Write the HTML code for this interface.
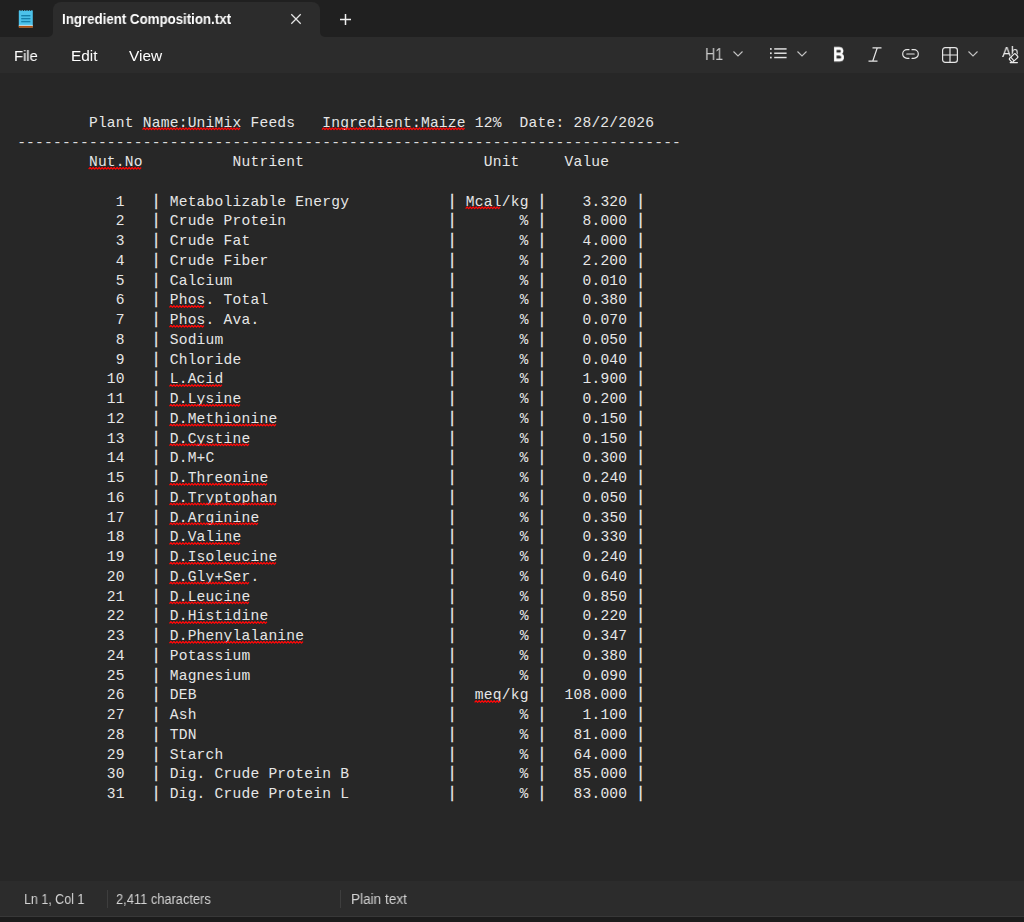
<!DOCTYPE html>
<html lang="en"><head><meta charset="utf-8"><title>Ingredient Composition.txt - Notepad</title>
<style>
*{box-sizing:border-box;margin:0;padding:0}
html,body{width:1024px;height:922px;overflow:hidden;background:#272727}
body{position:relative;font-family:"Liberation Sans",sans-serif;color:#fff}
.abs{position:absolute}
#titlebar{left:0;top:0;width:1024px;height:37px;background:#202020}
#tab{left:53px;top:2px;width:267px;height:36px;background:#2c2c2c;border-radius:8px 8px 0 0}
.flare{width:5px;height:5px;top:32px;background:#2c2c2c}
.flare i{display:block;width:5px;height:5px;background:#202020}
#fl{left:48px}#fl i{border-radius:0 0 5px 0}
#fr{left:320px}#fr i{border-radius:0 0 0 5px}
#menubar{left:0;top:37px;width:1024px;height:36px;background:#2c2c2c}
#editor{left:0;top:73px;width:1024px;height:808px;background:#272727}
#status{left:0;top:881px;width:1024px;height:35px;background:#2c2c2c}
#sline{left:0;top:916px;width:1024px;height:1px;background:#383838}
#bottom{left:0;top:917px;width:1024px;height:5px;background:#1c1c1c}
.t{position:absolute;white-space:pre;transform-origin:0 50%;line-height:20px;height:20px;will-change:transform}
#tabtitle{left:61.5px;top:9.3px;font-size:14px;font-weight:bold;color:#fff;transform:scaleX(.949)}
.menu{font-size:15.4px;top:46.2px;color:#fff}
.st{font-size:14px;top:889px;color:#d2d2d2}
.sep{width:1px;height:18px;top:890px;background:#3e3e3e}
pre{position:absolute;left:17.15px;top:113.5px;font-family:"Liberation Mono",monospace;font-size:14.6px;letter-spacing:0.2145px;line-height:19.75px;color:#e6e6e6;white-space:pre}
pre b{display:inline-block;font-weight:normal;transform:translateY(0.4px) scale(1.0,1.16);transform-origin:50% 92%;-webkit-text-stroke:0.28px #eeeeee;color:#eee}
pre u{text-decoration:none}
pre s{text-decoration:none;position:relative;top:0.8px;color:#dcdcdc}
svg{position:absolute;overflow:visible}
</style></head><body>
<div class="abs" id="titlebar"></div>
<div class="abs" id="menubar"></div>
<div class="abs" id="tab"></div>
<div class="abs flare" id="fl"><i></i></div>
<div class="abs flare" id="fr"><i></i></div>
<div class="abs" id="editor"></div>
<div class="abs" id="status"></div>
<div class="abs" id="sline"></div>
<div class="abs" id="bottom"></div>

<!-- notepad app icon -->
<svg id="appicon" style="left:18px;top:9px" width="16" height="20" viewBox="0 0 16 20">
<rect x="0.8" y="1.3" width="14" height="17.5" rx="0.8" fill="#4cc2ea"/>
<rect x="0.8" y="16.7" width="14" height="2.1" fill="#b4500f"/>
<rect x="0.8" y="15.9" width="14" height="0.8" fill="#d8f0fa"/>
<rect x="3.2" y="6" width="9.2" height="1.4" fill="#1580ab"/>
<rect x="3.2" y="8.95" width="9.2" height="1.4" fill="#1580ab"/>
<rect x="3.2" y="11.9" width="9.2" height="1.4" fill="#1580ab"/>
<g fill="#202020"><rect x="2.6" y="1" width="0.9" height="1"/><rect x="5" y="1" width="0.9" height="1"/><rect x="7.4" y="1" width="0.9" height="1"/><rect x="9.8" y="1" width="0.9" height="1"/><rect x="12.2" y="1" width="0.9" height="1"/></g>
</svg>

<span class="t" id="tabtitle">Ingredient Composition.txt</span>
<svg style="left:291px;top:14px" width="10" height="10" viewBox="0 0 10 10"><path d="M0.3 0.3L9.7 9.7M9.7 0.3L0.3 9.7" stroke="#e6e6e6" stroke-width="1.25" fill="none"/></svg>
<svg style="left:340px;top:14px" width="11" height="11" viewBox="0 0 11 11"><path d="M5.5 0V11M0 5.5H11" stroke="#f0f0f0" stroke-width="1.5" fill="none"/></svg>

<span class="t menu" id="mFile" style="left:14px;transform:scaleX(.96)">File</span>
<span class="t menu" id="mEdit" style="left:70.5px">Edit</span>
<span class="t menu" id="mView" style="left:128.5px">View</span>

<!-- toolbar -->
<span class="t" id="h1" style="left:704.6px;top:44px;font-size:16.5px;color:#c8c8c8;transform:scaleX(.855)">H1</span>
<svg style="left:733px;top:51px" width="10" height="6" viewBox="0 0 10 6"><path d="M0.5 0.5L5 5L9.5 0.5" stroke="#c4c4c4" stroke-width="1.1" fill="none"/></svg>
<svg id="listic" style="left:769.6px;top:48.3px" width="17" height="11" viewBox="0 0 17 11"><g fill="#e4e4e4"><rect x="0" y="0.1" width="1.7" height="1.7"/><rect x="0" y="4.4" width="1.7" height="1.7"/><rect x="0" y="8.7" width="1.7" height="1.7"/><rect x="4.2" y="0.2" width="12.4" height="1.45"/><rect x="4.2" y="4.5" width="12.4" height="1.45"/><rect x="4.2" y="8.8" width="12.4" height="1.45"/></g></svg>
<svg style="left:797px;top:51px" width="10" height="6" viewBox="0 0 10 6"><path d="M0.5 0.5L5 5L9.5 0.5" stroke="#c4c4c4" stroke-width="1.1" fill="none"/></svg>
<span class="t" id="boldB" style="left:832.6px;top:44.8px;font-size:19px;font-weight:bold;color:#fff;transform:scale(.84,1.07);-webkit-text-stroke:0.4px #fff">B</span>
<svg id="italic" style="left:868px;top:47px" width="14" height="15" viewBox="0 0 14 15"><path d="M4.5 0.8H13.5M0.5 14.2H9.5M9.3 0.8L4.7 14.2" stroke="#e6e6e6" stroke-width="1.2" fill="none"/></svg>
<svg id="link" style="left:902.3px;top:49.4px" width="17" height="10" viewBox="0 0 17 10"><path d="M7 0.7H5A4.3 4.3 0 0 0 5 9.3H7M10 0.7H12A4.3 4.3 0 0 1 12 9.3H10M4.8 5H12.2" stroke="#e6e6e6" stroke-width="1.2" fill="none" stroke-linecap="round"/></svg>
<svg id="table" style="left:942px;top:47px" width="16" height="16" viewBox="0 0 16 16"><rect x="0.6" y="0.6" width="14.8" height="14.8" rx="2.6" stroke="#e6e6e6" stroke-width="1.2" fill="none"/><path d="M8 0.6V15.4M0.6 8H15.4" stroke="#e6e6e6" stroke-width="1.2" fill="none"/></svg>
<svg style="left:968px;top:51px" width="10" height="6" viewBox="0 0 10 6"><path d="M0.5 0.5L5 5L9.5 0.5" stroke="#c4c4c4" stroke-width="1.1" fill="none"/></svg>
<span class="t" id="ab" style="left:1001.7px;top:41.9px;font-size:15.4px;color:#e8e8e8;letter-spacing:-0.6px;transform:scaleX(.9)">Ab</span>
<svg id="eraser" style="left:1006px;top:51px" width="14" height="13" viewBox="0 0 14 13"><g transform="translate(7.6 6.9) rotate(-43)"><rect x="-4.1" y="-2.5" width="8.2" height="5" rx="1.3" fill="#2c2c2c" stroke="#2c2c2c" stroke-width="2.4"/><rect x="-4.1" y="-2.5" width="8.2" height="5" rx="1.3" fill="#2c2c2c" stroke="#ebebeb" stroke-width="1.2"/><path d="M-1.7 -2.5V2.5" stroke="#ebebeb" stroke-width="1.1"/></g><path d="M4.2 11.6H11.4" stroke="#ebebeb" stroke-width="1.2" stroke-linecap="round"/></svg>

<pre id="doc">        Plant <u>Name:UniMix</u> Feeds   <u>Ingredient:Maize</u> 12%  Date: 28/2/2026
<s>--------------------------------------------------------------------------</s>
        <u>Nut.No</u>          Nutrient                    Unit     Value

           1   <b>|</b> Metabolizable Energy           <b>|</b> <u>Mcal</u>/kg <b>|</b>    3.320 <b>|</b>
           2   <b>|</b> Crude Protein                  <b>|</b>       % <b>|</b>    8.000 <b>|</b>
           3   <b>|</b> Crude Fat                      <b>|</b>       % <b>|</b>    4.000 <b>|</b>
           4   <b>|</b> Crude Fiber                    <b>|</b>       % <b>|</b>    2.200 <b>|</b>
           5   <b>|</b> Calcium                        <b>|</b>       % <b>|</b>    0.010 <b>|</b>
           6   <b>|</b> <u>Phos</u>. Total                    <b>|</b>       % <b>|</b>    0.380 <b>|</b>
           7   <b>|</b> <u>Phos</u>. Ava.                     <b>|</b>       % <b>|</b>    0.070 <b>|</b>
           8   <b>|</b> Sodium                         <b>|</b>       % <b>|</b>    0.050 <b>|</b>
           9   <b>|</b> Chloride                       <b>|</b>       % <b>|</b>    0.040 <b>|</b>
          10   <b>|</b> <u>L.Acid</u>                         <b>|</b>       % <b>|</b>    1.900 <b>|</b>
          11   <b>|</b> <u>D.Lysine</u>                       <b>|</b>       % <b>|</b>    0.200 <b>|</b>
          12   <b>|</b> <u>D.Methionine</u>                   <b>|</b>       % <b>|</b>    0.150 <b>|</b>
          13   <b>|</b> <u>D.Cystine</u>                      <b>|</b>       % <b>|</b>    0.150 <b>|</b>
          14   <b>|</b> D.M+C                          <b>|</b>       % <b>|</b>    0.300 <b>|</b>
          15   <b>|</b> <u>D.Threonine</u>                    <b>|</b>       % <b>|</b>    0.240 <b>|</b>
          16   <b>|</b> <u>D.Tryptophan</u>                   <b>|</b>       % <b>|</b>    0.050 <b>|</b>
          17   <b>|</b> <u>D.Arginine</u>                     <b>|</b>       % <b>|</b>    0.350 <b>|</b>
          18   <b>|</b> <u>D.Valine</u>                       <b>|</b>       % <b>|</b>    0.330 <b>|</b>
          19   <b>|</b> <u>D.Isoleucine</u>                   <b>|</b>       % <b>|</b>    0.240 <b>|</b>
          20   <b>|</b> <u>D.Gly+Ser</u>.                     <b>|</b>       % <b>|</b>    0.640 <b>|</b>
          21   <b>|</b> <u>D.Leucine</u>                      <b>|</b>       % <b>|</b>    0.850 <b>|</b>
          22   <b>|</b> <u>D.Histidine</u>                    <b>|</b>       % <b>|</b>    0.220 <b>|</b>
          23   <b>|</b> <u>D.Phenylalanine</u>                <b>|</b>       % <b>|</b>    0.347 <b>|</b>
          24   <b>|</b> Potassium                      <b>|</b>       % <b>|</b>    0.380 <b>|</b>
          25   <b>|</b> Magnesium                      <b>|</b>       % <b>|</b>    0.090 <b>|</b>
          26   <b>|</b> DEB                            <b>|</b>  <u>meq</u>/kg <b>|</b>  108.000 <b>|</b>
          27   <b>|</b> Ash                            <b>|</b>       % <b>|</b>    1.100 <b>|</b>
          28   <b>|</b> TDN                            <b>|</b>       % <b>|</b>   81.000 <b>|</b>
          29   <b>|</b> Starch                         <b>|</b>       % <b>|</b>   64.000 <b>|</b>
          30   <b>|</b> Dig. Crude Protein B           <b>|</b>       % <b>|</b>   85.000 <b>|</b>
          31   <b>|</b> Dig. Crude Protein L           <b>|</b>       % <b>|</b>   83.000 <b>|</b></pre>
<svg id="squig" style="left:0;top:0" width="1024" height="922" viewBox="0 0 1024 922"><path d="M142.51 129.60L144.01 128.00L145.51 129.60L147.01 128.00L148.51 129.60L150.01 128.00L151.51 129.60L153.01 128.00L154.51 129.60L156.01 128.00L157.51 129.60L159.01 128.00L160.51 129.60L162.01 128.00L163.51 129.60L165.01 128.00L166.51 129.60L168.01 128.00L169.51 129.60L171.01 128.00L172.51 129.60L174.01 128.00L175.51 129.60L177.01 128.00L178.51 129.60L180.01 128.00L181.51 129.60L183.01 128.00L184.51 129.60L186.01 128.00L187.51 129.60L189.01 128.00L190.51 129.60L192.01 128.00L193.51 129.60L195.01 128.00L196.51 129.60L198.01 128.00L199.51 129.60L201.01 128.00L202.51 129.60L204.01 128.00L205.51 129.60L207.01 128.00L208.51 129.60L210.01 128.00L211.51 129.60L213.01 128.00L214.51 129.60L216.01 128.00L217.51 129.60L219.01 128.00L220.51 129.60L222.01 128.00L223.51 129.60L225.01 128.00L226.51 129.60L228.01 128.00L229.51 129.60L231.01 128.00L232.51 129.60L234.01 128.00L235.51 129.60L237.01 128.00L238.51 129.60L240.01 128.00M322.03 129.60L323.53 128.00L325.03 129.60L326.53 128.00L328.03 129.60L329.53 128.00L331.03 129.60L332.53 128.00L334.03 129.60L335.53 128.00L337.03 129.60L338.53 128.00L340.03 129.60L341.53 128.00L343.03 129.60L344.53 128.00L346.03 129.60L347.53 128.00L349.03 129.60L350.53 128.00L352.03 129.60L353.53 128.00L355.03 129.60L356.53 128.00L358.03 129.60L359.53 128.00L361.03 129.60L362.53 128.00L364.03 129.60L365.53 128.00L367.03 129.60L368.53 128.00L370.03 129.60L371.53 128.00L373.03 129.60L374.53 128.00L376.03 129.60L377.53 128.00L379.03 129.60L380.53 128.00L382.03 129.60L383.53 128.00L385.03 129.60L386.53 128.00L388.03 129.60L389.53 128.00L391.03 129.60L392.53 128.00L394.03 129.60L395.53 128.00L397.03 129.60L398.53 128.00L400.03 129.60L401.53 128.00L403.03 129.60L404.53 128.00L406.03 129.60L407.53 128.00L409.03 129.60L410.53 128.00L412.03 129.60L413.53 128.00L415.03 129.60L416.53 128.00L418.03 129.60L419.53 128.00L421.03 129.60L422.53 128.00L424.03 129.60L425.53 128.00L427.03 129.60L428.53 128.00L430.03 129.60L431.53 128.00L433.03 129.60L434.53 128.00L436.03 129.60L437.53 128.00L439.03 129.60L440.53 128.00L442.03 129.60L443.53 128.00L445.03 129.60L446.53 128.00L448.03 129.60L449.53 128.00L451.03 129.60L452.53 128.00L454.03 129.60L455.53 128.00L457.03 129.60L458.53 128.00L460.03 129.60L461.53 128.00L463.03 129.60L464.53 128.00M88.66 169.10L90.16 167.50L91.66 169.10L93.16 167.50L94.66 169.10L96.16 167.50L97.66 169.10L99.16 167.50L100.66 169.10L102.16 167.50L103.66 169.10L105.16 167.50L106.66 169.10L108.16 167.50L109.66 169.10L111.16 167.50L112.66 169.10L114.16 167.50L115.66 169.10L117.16 167.50L118.66 169.10L120.16 167.50L121.66 169.10L123.16 167.50L124.66 169.10L126.16 167.50L127.66 169.10L129.16 167.50L130.66 169.10L132.16 167.50L133.66 169.10L135.16 167.50L136.66 169.10L138.16 167.50L139.66 169.10L141.16 167.50M465.65 208.60L467.15 207.00L468.65 208.60L470.15 207.00L471.65 208.60L473.15 207.00L474.65 208.60L476.15 207.00L477.65 208.60L479.15 207.00L480.65 208.60L482.15 207.00L483.65 208.60L485.15 207.00L486.65 208.60L488.15 207.00L489.65 208.60L491.15 207.00L492.65 208.60L494.15 207.00L495.65 208.60L497.15 207.00L498.65 208.60L500.15 207.00M169.44 307.35L170.94 305.75L172.44 307.35L173.94 305.75L175.44 307.35L176.94 305.75L178.44 307.35L179.94 305.75L181.44 307.35L182.94 305.75L184.44 307.35L185.94 305.75L187.44 307.35L188.94 305.75L190.44 307.35L191.94 305.75L193.44 307.35L194.94 305.75L196.44 307.35L197.94 305.75L199.44 307.35L200.94 305.75L202.44 307.35L203.94 305.75M169.44 327.10L170.94 325.50L172.44 327.10L173.94 325.50L175.44 327.10L176.94 325.50L178.44 327.10L179.94 325.50L181.44 327.10L182.94 325.50L184.44 327.10L185.94 325.50L187.44 327.10L188.94 325.50L190.44 327.10L191.94 325.50L193.44 327.10L194.94 325.50L196.44 327.10L197.94 325.50L199.44 327.10L200.94 325.50L202.44 327.10L203.94 325.50M169.44 386.35L170.94 384.75L172.44 386.35L173.94 384.75L175.44 386.35L176.94 384.75L178.44 386.35L179.94 384.75L181.44 386.35L182.94 384.75L184.44 386.35L185.94 384.75L187.44 386.35L188.94 384.75L190.44 386.35L191.94 384.75L193.44 386.35L194.94 384.75L196.44 386.35L197.94 384.75L199.44 386.35L200.94 384.75L202.44 386.35L203.94 384.75L205.44 386.35L206.94 384.75L208.44 386.35L209.94 384.75L211.44 386.35L212.94 384.75L214.44 386.35L215.94 384.75L217.44 386.35L218.94 384.75L220.44 386.35L221.94 384.75M169.44 406.10L170.94 404.50L172.44 406.10L173.94 404.50L175.44 406.10L176.94 404.50L178.44 406.10L179.94 404.50L181.44 406.10L182.94 404.50L184.44 406.10L185.94 404.50L187.44 406.10L188.94 404.50L190.44 406.10L191.94 404.50L193.44 406.10L194.94 404.50L196.44 406.10L197.94 404.50L199.44 406.10L200.94 404.50L202.44 406.10L203.94 404.50L205.44 406.10L206.94 404.50L208.44 406.10L209.94 404.50L211.44 406.10L212.94 404.50L214.44 406.10L215.94 404.50L217.44 406.10L218.94 404.50L220.44 406.10L221.94 404.50L223.44 406.10L224.94 404.50L226.44 406.10L227.94 404.50L229.44 406.10L230.94 404.50L232.44 406.10L233.94 404.50L235.44 406.10L236.94 404.50L238.44 406.10L239.94 404.50M169.44 425.85L170.94 424.25L172.44 425.85L173.94 424.25L175.44 425.85L176.94 424.25L178.44 425.85L179.94 424.25L181.44 425.85L182.94 424.25L184.44 425.85L185.94 424.25L187.44 425.85L188.94 424.25L190.44 425.85L191.94 424.25L193.44 425.85L194.94 424.25L196.44 425.85L197.94 424.25L199.44 425.85L200.94 424.25L202.44 425.85L203.94 424.25L205.44 425.85L206.94 424.25L208.44 425.85L209.94 424.25L211.44 425.85L212.94 424.25L214.44 425.85L215.94 424.25L217.44 425.85L218.94 424.25L220.44 425.85L221.94 424.25L223.44 425.85L224.94 424.25L226.44 425.85L227.94 424.25L229.44 425.85L230.94 424.25L232.44 425.85L233.94 424.25L235.44 425.85L236.94 424.25L238.44 425.85L239.94 424.25L241.44 425.85L242.94 424.25L244.44 425.85L245.94 424.25L247.44 425.85L248.94 424.25L250.44 425.85L251.94 424.25L253.44 425.85L254.94 424.25L256.44 425.85L257.94 424.25L259.44 425.85L260.94 424.25L262.44 425.85L263.94 424.25L265.44 425.85L266.94 424.25L268.44 425.85L269.94 424.25L271.44 425.85L272.94 424.25L274.44 425.85L275.94 424.25M169.44 445.60L170.94 444.00L172.44 445.60L173.94 444.00L175.44 445.60L176.94 444.00L178.44 445.60L179.94 444.00L181.44 445.60L182.94 444.00L184.44 445.60L185.94 444.00L187.44 445.60L188.94 444.00L190.44 445.60L191.94 444.00L193.44 445.60L194.94 444.00L196.44 445.60L197.94 444.00L199.44 445.60L200.94 444.00L202.44 445.60L203.94 444.00L205.44 445.60L206.94 444.00L208.44 445.60L209.94 444.00L211.44 445.60L212.94 444.00L214.44 445.60L215.94 444.00L217.44 445.60L218.94 444.00L220.44 445.60L221.94 444.00L223.44 445.60L224.94 444.00L226.44 445.60L227.94 444.00L229.44 445.60L230.94 444.00L232.44 445.60L233.94 444.00L235.44 445.60L236.94 444.00L238.44 445.60L239.94 444.00L241.44 445.60L242.94 444.00L244.44 445.60L245.94 444.00L247.44 445.60L248.94 444.00M169.44 485.10L170.94 483.50L172.44 485.10L173.94 483.50L175.44 485.10L176.94 483.50L178.44 485.10L179.94 483.50L181.44 485.10L182.94 483.50L184.44 485.10L185.94 483.50L187.44 485.10L188.94 483.50L190.44 485.10L191.94 483.50L193.44 485.10L194.94 483.50L196.44 485.10L197.94 483.50L199.44 485.10L200.94 483.50L202.44 485.10L203.94 483.50L205.44 485.10L206.94 483.50L208.44 485.10L209.94 483.50L211.44 485.10L212.94 483.50L214.44 485.10L215.94 483.50L217.44 485.10L218.94 483.50L220.44 485.10L221.94 483.50L223.44 485.10L224.94 483.50L226.44 485.10L227.94 483.50L229.44 485.10L230.94 483.50L232.44 485.10L233.94 483.50L235.44 485.10L236.94 483.50L238.44 485.10L239.94 483.50L241.44 485.10L242.94 483.50L244.44 485.10L245.94 483.50L247.44 485.10L248.94 483.50L250.44 485.10L251.94 483.50L253.44 485.10L254.94 483.50L256.44 485.10L257.94 483.50L259.44 485.10L260.94 483.50L262.44 485.10L263.94 483.50L265.44 485.10L266.94 483.50M169.44 504.85L170.94 503.25L172.44 504.85L173.94 503.25L175.44 504.85L176.94 503.25L178.44 504.85L179.94 503.25L181.44 504.85L182.94 503.25L184.44 504.85L185.94 503.25L187.44 504.85L188.94 503.25L190.44 504.85L191.94 503.25L193.44 504.85L194.94 503.25L196.44 504.85L197.94 503.25L199.44 504.85L200.94 503.25L202.44 504.85L203.94 503.25L205.44 504.85L206.94 503.25L208.44 504.85L209.94 503.25L211.44 504.85L212.94 503.25L214.44 504.85L215.94 503.25L217.44 504.85L218.94 503.25L220.44 504.85L221.94 503.25L223.44 504.85L224.94 503.25L226.44 504.85L227.94 503.25L229.44 504.85L230.94 503.25L232.44 504.85L233.94 503.25L235.44 504.85L236.94 503.25L238.44 504.85L239.94 503.25L241.44 504.85L242.94 503.25L244.44 504.85L245.94 503.25L247.44 504.85L248.94 503.25L250.44 504.85L251.94 503.25L253.44 504.85L254.94 503.25L256.44 504.85L257.94 503.25L259.44 504.85L260.94 503.25L262.44 504.85L263.94 503.25L265.44 504.85L266.94 503.25L268.44 504.85L269.94 503.25L271.44 504.85L272.94 503.25L274.44 504.85L275.94 503.25M169.44 524.60L170.94 523.00L172.44 524.60L173.94 523.00L175.44 524.60L176.94 523.00L178.44 524.60L179.94 523.00L181.44 524.60L182.94 523.00L184.44 524.60L185.94 523.00L187.44 524.60L188.94 523.00L190.44 524.60L191.94 523.00L193.44 524.60L194.94 523.00L196.44 524.60L197.94 523.00L199.44 524.60L200.94 523.00L202.44 524.60L203.94 523.00L205.44 524.60L206.94 523.00L208.44 524.60L209.94 523.00L211.44 524.60L212.94 523.00L214.44 524.60L215.94 523.00L217.44 524.60L218.94 523.00L220.44 524.60L221.94 523.00L223.44 524.60L224.94 523.00L226.44 524.60L227.94 523.00L229.44 524.60L230.94 523.00L232.44 524.60L233.94 523.00L235.44 524.60L236.94 523.00L238.44 524.60L239.94 523.00L241.44 524.60L242.94 523.00L244.44 524.60L245.94 523.00L247.44 524.60L248.94 523.00L250.44 524.60L251.94 523.00L253.44 524.60L254.94 523.00L256.44 524.60L257.94 523.00M169.44 544.35L170.94 542.75L172.44 544.35L173.94 542.75L175.44 544.35L176.94 542.75L178.44 544.35L179.94 542.75L181.44 544.35L182.94 542.75L184.44 544.35L185.94 542.75L187.44 544.35L188.94 542.75L190.44 544.35L191.94 542.75L193.44 544.35L194.94 542.75L196.44 544.35L197.94 542.75L199.44 544.35L200.94 542.75L202.44 544.35L203.94 542.75L205.44 544.35L206.94 542.75L208.44 544.35L209.94 542.75L211.44 544.35L212.94 542.75L214.44 544.35L215.94 542.75L217.44 544.35L218.94 542.75L220.44 544.35L221.94 542.75L223.44 544.35L224.94 542.75L226.44 544.35L227.94 542.75L229.44 544.35L230.94 542.75L232.44 544.35L233.94 542.75L235.44 544.35L236.94 542.75L238.44 544.35L239.94 542.75M169.44 564.10L170.94 562.50L172.44 564.10L173.94 562.50L175.44 564.10L176.94 562.50L178.44 564.10L179.94 562.50L181.44 564.10L182.94 562.50L184.44 564.10L185.94 562.50L187.44 564.10L188.94 562.50L190.44 564.10L191.94 562.50L193.44 564.10L194.94 562.50L196.44 564.10L197.94 562.50L199.44 564.10L200.94 562.50L202.44 564.10L203.94 562.50L205.44 564.10L206.94 562.50L208.44 564.10L209.94 562.50L211.44 564.10L212.94 562.50L214.44 564.10L215.94 562.50L217.44 564.10L218.94 562.50L220.44 564.10L221.94 562.50L223.44 564.10L224.94 562.50L226.44 564.10L227.94 562.50L229.44 564.10L230.94 562.50L232.44 564.10L233.94 562.50L235.44 564.10L236.94 562.50L238.44 564.10L239.94 562.50L241.44 564.10L242.94 562.50L244.44 564.10L245.94 562.50L247.44 564.10L248.94 562.50L250.44 564.10L251.94 562.50L253.44 564.10L254.94 562.50L256.44 564.10L257.94 562.50L259.44 564.10L260.94 562.50L262.44 564.10L263.94 562.50L265.44 564.10L266.94 562.50L268.44 564.10L269.94 562.50L271.44 564.10L272.94 562.50L274.44 564.10L275.94 562.50M169.44 583.85L170.94 582.25L172.44 583.85L173.94 582.25L175.44 583.85L176.94 582.25L178.44 583.85L179.94 582.25L181.44 583.85L182.94 582.25L184.44 583.85L185.94 582.25L187.44 583.85L188.94 582.25L190.44 583.85L191.94 582.25L193.44 583.85L194.94 582.25L196.44 583.85L197.94 582.25L199.44 583.85L200.94 582.25L202.44 583.85L203.94 582.25L205.44 583.85L206.94 582.25L208.44 583.85L209.94 582.25L211.44 583.85L212.94 582.25L214.44 583.85L215.94 582.25L217.44 583.85L218.94 582.25L220.44 583.85L221.94 582.25L223.44 583.85L224.94 582.25L226.44 583.85L227.94 582.25L229.44 583.85L230.94 582.25L232.44 583.85L233.94 582.25L235.44 583.85L236.94 582.25L238.44 583.85L239.94 582.25L241.44 583.85L242.94 582.25L244.44 583.85L245.94 582.25L247.44 583.85L248.94 582.25M169.44 603.60L170.94 602.00L172.44 603.60L173.94 602.00L175.44 603.60L176.94 602.00L178.44 603.60L179.94 602.00L181.44 603.60L182.94 602.00L184.44 603.60L185.94 602.00L187.44 603.60L188.94 602.00L190.44 603.60L191.94 602.00L193.44 603.60L194.94 602.00L196.44 603.60L197.94 602.00L199.44 603.60L200.94 602.00L202.44 603.60L203.94 602.00L205.44 603.60L206.94 602.00L208.44 603.60L209.94 602.00L211.44 603.60L212.94 602.00L214.44 603.60L215.94 602.00L217.44 603.60L218.94 602.00L220.44 603.60L221.94 602.00L223.44 603.60L224.94 602.00L226.44 603.60L227.94 602.00L229.44 603.60L230.94 602.00L232.44 603.60L233.94 602.00L235.44 603.60L236.94 602.00L238.44 603.60L239.94 602.00L241.44 603.60L242.94 602.00L244.44 603.60L245.94 602.00L247.44 603.60L248.94 602.00M169.44 623.35L170.94 621.75L172.44 623.35L173.94 621.75L175.44 623.35L176.94 621.75L178.44 623.35L179.94 621.75L181.44 623.35L182.94 621.75L184.44 623.35L185.94 621.75L187.44 623.35L188.94 621.75L190.44 623.35L191.94 621.75L193.44 623.35L194.94 621.75L196.44 623.35L197.94 621.75L199.44 623.35L200.94 621.75L202.44 623.35L203.94 621.75L205.44 623.35L206.94 621.75L208.44 623.35L209.94 621.75L211.44 623.35L212.94 621.75L214.44 623.35L215.94 621.75L217.44 623.35L218.94 621.75L220.44 623.35L221.94 621.75L223.44 623.35L224.94 621.75L226.44 623.35L227.94 621.75L229.44 623.35L230.94 621.75L232.44 623.35L233.94 621.75L235.44 623.35L236.94 621.75L238.44 623.35L239.94 621.75L241.44 623.35L242.94 621.75L244.44 623.35L245.94 621.75L247.44 623.35L248.94 621.75L250.44 623.35L251.94 621.75L253.44 623.35L254.94 621.75L256.44 623.35L257.94 621.75L259.44 623.35L260.94 621.75L262.44 623.35L263.94 621.75L265.44 623.35L266.94 621.75M169.44 643.10L170.94 641.50L172.44 643.10L173.94 641.50L175.44 643.10L176.94 641.50L178.44 643.10L179.94 641.50L181.44 643.10L182.94 641.50L184.44 643.10L185.94 641.50L187.44 643.10L188.94 641.50L190.44 643.10L191.94 641.50L193.44 643.10L194.94 641.50L196.44 643.10L197.94 641.50L199.44 643.10L200.94 641.50L202.44 643.10L203.94 641.50L205.44 643.10L206.94 641.50L208.44 643.10L209.94 641.50L211.44 643.10L212.94 641.50L214.44 643.10L215.94 641.50L217.44 643.10L218.94 641.50L220.44 643.10L221.94 641.50L223.44 643.10L224.94 641.50L226.44 643.10L227.94 641.50L229.44 643.10L230.94 641.50L232.44 643.10L233.94 641.50L235.44 643.10L236.94 641.50L238.44 643.10L239.94 641.50L241.44 643.10L242.94 641.50L244.44 643.10L245.94 641.50L247.44 643.10L248.94 641.50L250.44 643.10L251.94 641.50L253.44 643.10L254.94 641.50L256.44 643.10L257.94 641.50L259.44 643.10L260.94 641.50L262.44 643.10L263.94 641.50L265.44 643.10L266.94 641.50L268.44 643.10L269.94 641.50L271.44 643.10L272.94 641.50L274.44 643.10L275.94 641.50L277.44 643.10L278.94 641.50L280.44 643.10L281.94 641.50L283.44 643.10L284.94 641.50L286.44 643.10L287.94 641.50L289.44 643.10L290.94 641.50L292.44 643.10L293.94 641.50L295.44 643.10L296.94 641.50L298.44 643.10L299.94 641.50L301.44 643.10L302.94 641.50M474.63 702.35L476.13 700.75L477.63 702.35L479.13 700.75L480.63 702.35L482.13 700.75L483.63 702.35L485.13 700.75L486.63 702.35L488.13 700.75L489.63 702.35L491.13 700.75L492.63 702.35L494.13 700.75L495.63 702.35L497.13 700.75L498.63 702.35L500.13 700.75" stroke="#ff0808" stroke-width="1.25" fill="none" stroke-linejoin="round"/></svg>

<span class="t st" id="s1" style="left:23.5px;transform:scaleX(.89)">Ln 1, Col 1</span>
<div class="abs sep" style="left:107px"></div>
<span class="t st" id="s2" style="left:115.5px;transform:scaleX(.918)">2,411 characters</span>
<div class="abs sep" style="left:340px"></div>
<span class="t st" id="s3" style="left:350.5px;transform:scaleX(.97)">Plain text</span>
</body></html>
